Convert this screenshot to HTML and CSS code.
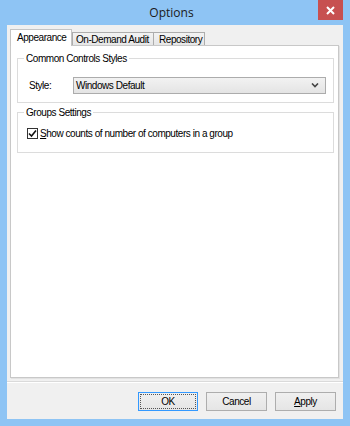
FILE: index.html
```html
<html>
<head>
  <meta charset="UTF-8">
  <meta name="viewport" content="width=device-width, initial-scale=1.0">
  <title>Options</title>
  <link rel="stylesheet" href="styles.css">
</head>
<body>
  <div class="window">
    <div class="titlebar">
      <span class="title">Options</span>
      <div class="close">
        <svg width="9" height="9" viewBox="0 0 9 9">
          <path d="M1 1 L8 8 M8 1 L1 8" stroke="#fff" stroke-width="2"/>
        </svg>
      </div>
    </div>

    <div class="client">
      <div class="tabs">
        <div class="tab-strip">
          <div class="tab active">Appearance</div>
          <div class="tab tab-audit">On-Demand Audit</div>
          <div class="tab tab-repo">Repository</div>
        </div>

        <div class="tab-panel">
          <fieldset class="group group-styles">
            <legend>Common Controls Styles</legend>
            <div class="row">
              <label class="field-label">Style:</label>
              <div class="combo">
                <span>Windows Default</span>
                <svg width="8" height="5" viewBox="0 0 8 5">
                  <path d="M1 0.5 L4 3.5 L7 0.5" fill="none" stroke="#444" stroke-width="1.6"/>
                </svg>
              </div>
            </div>
          </fieldset>

          <fieldset class="group group-settings">
            <legend>Groups Settings</legend>
            <div class="row">
              <div class="checkbox">
                <svg width="9" height="9" viewBox="0 0 9 9">
                  <path d="M1 4.5 L3.5 7 L8 1.5" fill="none" stroke="#111" stroke-width="1.6"/>
                </svg>
              </div>
              <span class="check-label"><u>S</u>how counts of number of computers in a group</span>
            </div>
          </fieldset>
        </div>
      </div>

      <div class="footer">
        <div class="btn btn-default"><span>OK</span></div>
        <div class="btn"><span>Cancel</span></div>
        <div class="btn"><span><u>A</u>pply</span></div>
      </div>
    </div>
  </div>
</body>
</html>
```

FILE: styles.css
```css
body {
  margin: 0;
  font-family: "Liberation Sans", Arial, sans-serif;
  font-size: 10px;
  letter-spacing: -0.45px;
  color: #000;
}

.window {
  width: 350px;
  height: 426px;
  background-color: #8ec4f4;
  display: flex;
  flex-direction: column;
  box-sizing: border-box;
  padding: 0 7px 7px 7px;
}

/* title bar */
.titlebar {
  height: 25px;
  display: grid;
  grid-template-columns: 1fr auto 1fr;
  margin: 0 -7px;
  padding-right: 7px;
}

.title {
  grid-column: 2;
  font-family: "Open Sans", sans-serif;
  font-size: 12px;
  letter-spacing: 0;
  line-height: 26px;
  color: #1a1a1a;
}

.close {
  grid-column: 3;
  justify-self: end;
  width: 25px;
  height: 20px;
  background-color: #c75050;
  display: flex;
  align-items: center;
  justify-content: center;
}

/* client area */
.client {
  flex: 1;
  background-color: #f0f0f0;
  display: flex;
  flex-direction: column;
}

.tabs {
  flex: 1;
  display: flex;
  flex-direction: column;
  margin: 4px 4px 0 3px;
}

.tab-strip {
  display: flex;
  align-items: flex-end;
  height: 16px;
  position: relative;
  z-index: 1;
}

.tab {
  height: 13px;
  line-height: 13px;
  box-sizing: border-box;
  border: 1px solid #adadad;
  border-bottom: none;
  background: linear-gradient(#f3f3f3, #e6e6e6);
  padding: 0 5px;
  margin-left: -1px;
  white-space: nowrap;
}

.tab.active {
  height: 17px;
  line-height: 16px;
  width: 62px;
  margin-left: 0;
  margin-bottom: -1px;
  background: #fff;
  border-color: #c4c4c4;
  padding: 0 6px;
}

.tab-audit {
  width: 82px;
  margin-left: 0;
  padding-left: 3px;
}

.tab-repo {
  width: 52px;
  padding-left: 5px;
}

.tab-panel {
  flex: 1;
  background-color: #fff;
  border: 1px solid #c8c8c8;
  box-shadow: 1px 1px 0 #e2e2e2;
  padding: 6px 4px 0 6px;
}

/* group boxes */
.group {
  margin: 0;
  padding: 0;
  border: 1px solid #dcdcdc;
}

.group legend {
  margin-left: 6px;
  padding: 0 2px;
  line-height: 13px;
}

.group-styles .row {
  padding: 12px 7px 8px 11px;
}

.group-settings {
  margin-top: 3px;
}

.group-settings .row {
  padding: 9px 7px 13px 9px;
}

.row {
  display: flex;
  align-items: center;
}

.field-label {
  width: 44px;
}

.combo {
  flex: 1;
  height: 17px;
  box-sizing: border-box;
  border: 1px solid #acacac;
  background: linear-gradient(#f2f2f2, #e4e4e4);
  display: flex;
  align-items: center;
  justify-content: space-between;
  padding: 0 6px 0 2px;
}

.checkbox {
  width: 11px;
  height: 11px;
  box-sizing: border-box;
  border: 1px solid #333;
  background-color: #fff;
  display: flex;
  align-items: center;
  justify-content: center;
  margin-right: 2px;
}

/* buttons */
.footer {
  margin-top: 3px;
  border-top: 1px solid #dadada;
  box-shadow: inset 0 1px 0 #fff;
  padding: 10px 7px 8px 0;
  display: flex;
  justify-content: flex-end;
  gap: 8px;
}

.btn {
  width: 61px;
  height: 19px;
  box-sizing: border-box;
  border: 1px solid #adadad;
  background: linear-gradient(#f0f0f0, #e5e5e5);
  display: flex;
  align-items: center;
  justify-content: center;
}

.btn-default {
  width: 60px;
  border-color: #3399ff;
  padding: 1px;
}

.btn-default span {
  flex: 1;
  align-self: stretch;
  border: 1px dotted #555;
  display: flex;
  align-items: center;
  justify-content: center;
}
```
